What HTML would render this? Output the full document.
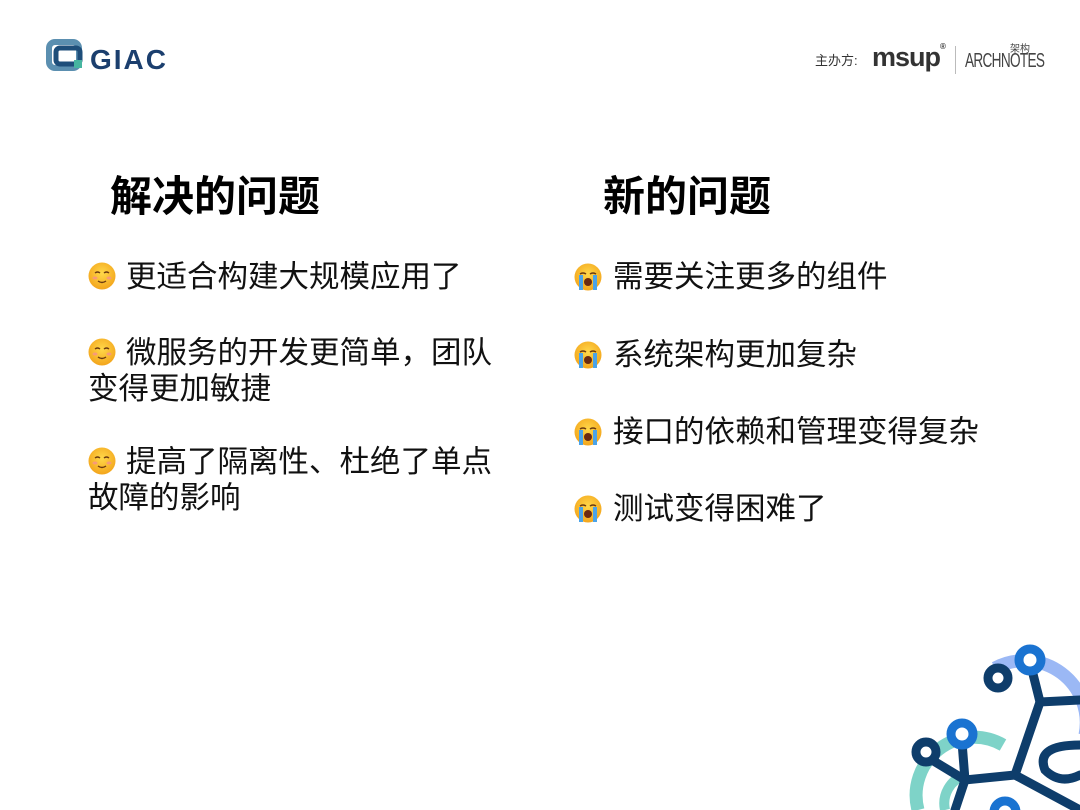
<!DOCTYPE html>
<html><head><meta charset="utf-8"><style>
body{margin:0;width:1080px;height:810px;background:#fff;position:relative;overflow:hidden;font-family:"Liberation Sans","Noto Sans CJK SC",sans-serif;color:#111}
.t{position:absolute;white-space:nowrap;font-size:30.5px;line-height:36px}
.h{position:absolute;font-size:42px;font-weight:bold;line-height:50px;white-space:nowrap;color:#000}
.e{position:absolute;width:28px;height:28px}
</style></head><body>
<svg style="position:absolute;left:46px;top:38px" width="135" height="36" viewBox="0 0 135 36">
<rect x="3" y="4" width="30" height="26" rx="6" fill="none" stroke="#5b8fb0" stroke-width="6"/>
<rect x="10" y="10" width="24" height="16" rx="4" fill="none" stroke="#1e4e7a" stroke-width="5"/>
<rect x="28" y="22" width="8" height="8" fill="#46b5a0"/>
<text x="44" y="31" font-family="Liberation Sans" font-weight="bold" font-size="28" fill="#1b3f6e" letter-spacing="2">GIAC</text>
</svg>
<div style="position:absolute;left:815px;top:50px;font-size:13px;color:#333">主办方:</div>
<div style="position:absolute;left:872px;top:42px;font-size:27px;font-weight:bold;color:#333;letter-spacing:-1px">msup<span style="font-size:8px;vertical-align:top">®</span></div>
<div style="position:absolute;left:955px;top:46px;width:1px;height:28px;background:#bbb"></div>
<div style="position:absolute;left:965px;top:50px;font-size:20px;color:#444;transform:scaleX(.68);transform-origin:left;letter-spacing:-1px">ARCHNOTES</div>
<div style="position:absolute;left:1010px;top:40px;font-size:10px;color:#444">架构</div>

<div class="h" style="left:110px;top:172px">解决的问题</div>
<div class="h" style="left:603px;top:172px">新的问题</div>

<svg width="0" height="0" style="position:absolute"><defs>
<radialGradient id="y" cx="50%" cy="40%" r="60%"><stop offset="0" stop-color="#ffd84a"/><stop offset="1" stop-color="#f3a51c"/></radialGradient>
<symbol id="smile" viewBox="0 0 28 28"><circle cx="14" cy="14" r="13.5" fill="url(#y)"/><path d="M7 11q2.5-2 5 0M16 11q2.5-2 5 0" stroke="#6b3a10" stroke-width="1.4" fill="none"/><ellipse cx="7" cy="16" rx="2.5" ry="1.5" fill="#f79a7a"/><ellipse cx="21" cy="16" rx="2.5" ry="1.5" fill="#f79a7a"/><path d="M10 19q4 3 8 0" stroke="#6b3a10" stroke-width="1.4" fill="none"/></symbol>
<symbol id="cry" viewBox="0 0 28 28"><circle cx="14" cy="14" r="13.5" fill="url(#y)"/><path d="M6 11q3-2 6 0M16 11q3-2 6 0" stroke="#6b3a10" stroke-width="1.5" fill="none"/><ellipse cx="14" cy="19" rx="4" ry="4" fill="#6b2a10"/><path d="M5 12h4v15h-4zM19 12h4v15h-4z" fill="#4aa3e8"/></symbol>
</defs></svg>

<svg class="e" style="left:88px;top:262px"><use href="#smile"/></svg>
<div class="t" style="left:126px;top:259px">更适合构建大规模应用了</div>
<svg class="e" style="left:88px;top:338px"><use href="#smile"/></svg>
<div class="t" style="left:126px;top:335px">微服务的开发更简单，团队</div>
<div class="t" style="left:88px;top:371px">变得更加敏捷</div>
<svg class="e" style="left:88px;top:447px"><use href="#smile"/></svg>
<div class="t" style="left:126px;top:444px">提高了隔离性、杜绝了单点</div>
<div class="t" style="left:88px;top:480px">故障的影响</div>

<svg class="e" style="left:574px;top:263px"><use href="#cry"/></svg>
<div class="t" style="left:613px;top:259px">需要关注更多的组件</div>
<svg class="e" style="left:574px;top:341px"><use href="#cry"/></svg>
<div class="t" style="left:613px;top:337px">系统架构更加复杂</div>
<svg class="e" style="left:574px;top:418px"><use href="#cry"/></svg>
<div class="t" style="left:613px;top:414px">接口的依赖和管理变得复杂</div>
<svg class="e" style="left:574px;top:495px"><use href="#cry"/></svg>
<div class="t" style="left:613px;top:491px">测试变得困难了</div>

<svg style="position:absolute;left:900px;top:630px" width="180" height="180" viewBox="900 630 180 180">
<path d="M995 668 A62 62 0 0 1 1085 735" stroke="#9bb8f5" stroke-width="13" fill="none"/>
<path d="M918 810 A58 58 0 0 1 1003 745" stroke="#7ed3c8" stroke-width="13" fill="none"/>
<path d="M945 810 A30 30 0 0 1 965 775" stroke="#7ed3c8" stroke-width="10" fill="none"/>
<g stroke="#0e3d6b" stroke-width="9" fill="none" stroke-linecap="round">
<path d="M1030 662 L1040 702 L1080 700"/>
<path d="M1040 702 L1015 775 L1080 810"/>
<path d="M1015 775 L965 780 L962 742"/>
<path d="M965 780 L932 760"/>
<path d="M965 780 L955 810"/>
<path d="M1080 745 Q1035 745 1045 770 Q1060 785 1080 775"/>
</g>
<g fill="#fff" stroke-width="9">
<circle cx="1030" cy="660" r="11" stroke="#1a73d1"/>
<circle cx="998" cy="678" r="10" stroke="#0e3d6b"/>
<circle cx="962" cy="734" r="11" stroke="#1a73d1"/>
<circle cx="926" cy="752" r="10" stroke="#0e3d6b"/>
<circle cx="1005" cy="812" r="11" stroke="#1a73d1"/>
</g>
</svg>
</body></html>
